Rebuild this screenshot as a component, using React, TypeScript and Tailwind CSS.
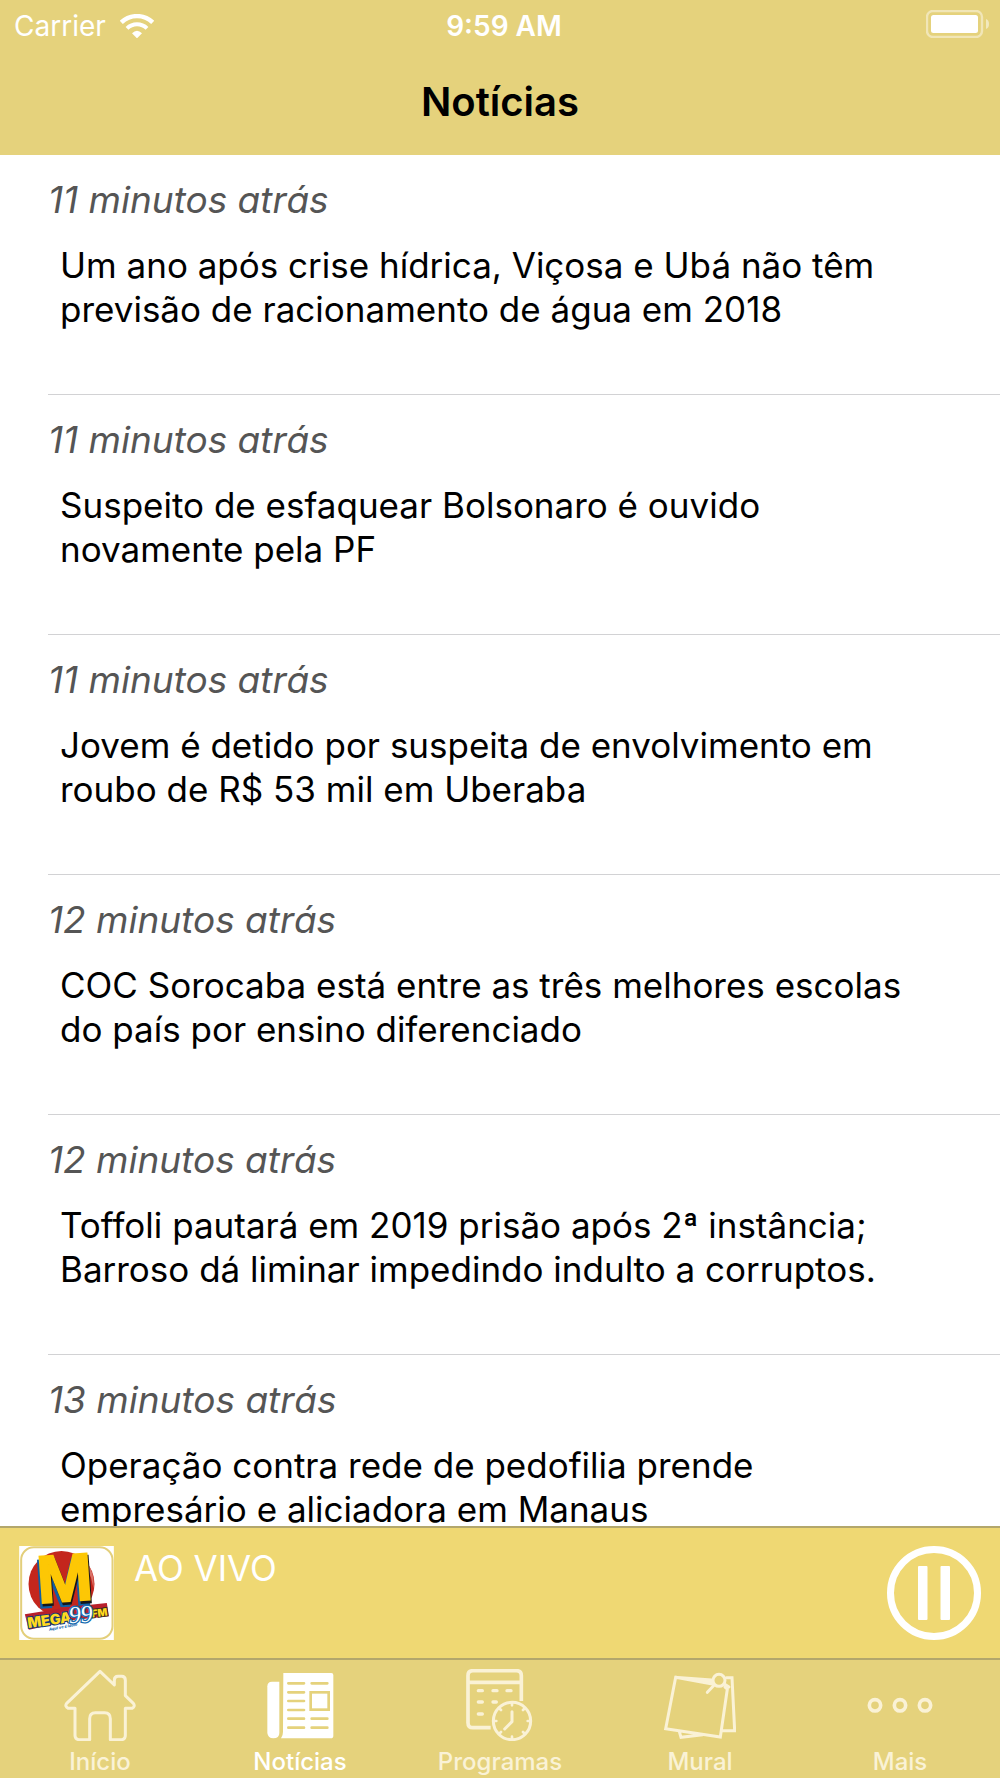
import type { ReactNode } from "react";

const news = [
  { time: "11 minutos atrás", title: "Um ano após crise hídrica, Viçosa e Ubá não têm previsão de racionamento de água em 2018" },
  { time: "11 minutos atrás", title: "Suspeito de esfaquear Bolsonaro é ouvido novamente pela PF" },
  { time: "11 minutos atrás", title: "Jovem é detido por suspeita de envolvimento em roubo de R$ 53 mil em Uberaba" },
  { time: "12 minutos atrás", title: "COC Sorocaba está entre as três melhores escolas do país por ensino diferenciado" },
  { time: "12 minutos atrás", title: "Toffoli pautará em 2019 prisão após 2ª instância; Barroso dá liminar impedindo indulto a corruptos." },
  { time: "13 minutos atrás", title: "Operação contra rede de pedofilia prende empresário e aliciadora em Manaus" },
];

function WifiIcon() {
  return (
    <svg className="h-6 w-[34px]" viewBox="0 0 102 72" aria-hidden="true">
      <g fill="none" stroke="#fff">
        <path d="M4 25 A68 68 0 0 1 98 25" strokeWidth="13" />
        <path d="M21 43 A43 43 0 0 1 81 43" strokeWidth="12" />
      </g>
      <path d="M36 58 Q51 43 66 58 L51 73 Z" fill="#fff" />
    </svg>
  );
}

function BatteryIcon() {
  return (
    <svg className="h-7 w-16" viewBox="0 0 64 28" aria-hidden="true">
      <rect x="1" y="1" width="55" height="26" rx="6" fill="none" stroke="#fff" strokeOpacity=".45" strokeWidth="2.4" />
      <rect x="5" y="5" width="47" height="18" rx="2.5" fill="#fff" />
      <path d="M60 9 Q63 10 63 14 Q63 18 60 19 Z" fill="#fff" fillOpacity=".5" />
    </svg>
  );
}

function StationLogo() {
  return (
    <svg className="h-[94px] w-[95px] shrink-0" viewBox="27 33 284 282" role="img" aria-label="Mega 99 FM">
      <rect x="27" y="33" width="284" height="282" fill="#fff" />
      <rect x="33" y="37" width="274" height="274" rx="38" fill="none" stroke="#e3cf7b" strokeWidth="6" />
      <circle cx="154" cy="147" r="99" fill="#c4261d" />
      <path d="M202 60 Q256 92 250 160 Q240 96 202 60Z" fill="#d97368" />
      <g fontFamily="'Liberation Sans', sans-serif" fontWeight="700" fontSize="200" strokeLinejoin="miter">
        <g transform="rotate(-4 160 140)">
          <text x="77" y="211" fill="#0f5fa5" stroke="#0f5fa5" strokeWidth="10">M</text>
          <text x="83" y="206" fill="#15161a" stroke="#15161a" strokeWidth="8">M</text>
          <text x="81" y="199" fill="#fdc705" stroke="#fdc705" strokeWidth="7">M</text>
        </g>
      </g>
      <path d="M44 238 L178 216 L290 204 L296 244 L196 254 L56 284Z" fill="#b8202b" />
      <g fontFamily="Inter, sans-serif" fontWeight="900" transform="rotate(-8 120 260)">
        <text x="52" y="270" fontSize="43" fill="#ffd91e" stroke="#133b73" strokeWidth="6" paintOrder="stroke">MEGA</text>
        <text x="246" y="265" fontSize="31" fill="#ffd91e" stroke="#3b2c1d" strokeWidth="6" paintOrder="stroke">FM</text>
      </g>
      <text x="176" y="262" fontFamily="'Liberation Serif', serif" fontStyle="italic" fontSize="72" fill="#fff" stroke="#176bb0" strokeWidth="8" paintOrder="stroke" transform="rotate(-4 214 250)">99</text>
      <text x="117" y="287" fontFamily="Inter, sans-serif" fontStyle="italic" fontWeight="800" fontSize="12" fill="#1769ad" transform="rotate(-10 117 287)">Aqui vc é ídolo</text>
    </svg>
  );
}

function PauseIcon() {
  return (
    <svg className="size-[94px]" viewBox="0 0 94 94" aria-hidden="true">
      <circle cx="47" cy="47" r="43.5" fill="none" stroke="#fff" strokeWidth="7" />
      <rect x="31" y="20" width="9.5" height="54" rx="1" fill="#fff" />
      <rect x="53.5" y="20" width="9.5" height="54" rx="1" fill="#fff" />
    </svg>
  );
}

function TabIcon({ children }: { children: ReactNode }) {
  return (
    <svg className="size-[72px]" viewBox="0 0 216 216" fill="none" stroke="#faf2d6" strokeWidth="9" strokeLinejoin="round" strokeLinecap="round" aria-hidden="true">
      {children}
    </svg>
  );
}

const homeIcon = (
  <TabIcon>
    <path d="M108 7 L151 48 V34 Q151 22 162 22 H173 Q184 22 184 34 V80 L208 103 Q215 112 204 118 H184 V199 Q184 212 172 212 H139 V149 Q139 131 122 131 H94 Q77 131 77 149 V212 H46 Q33 212 33 199 V118 H13 Q1 112 8 103 Z" />
  </TabIcon>
);

const newsIcon = (
  <TabIcon>
    <g stroke="none" fill="#fff">
      <path d="M46 38 H24 Q10 38 10 52 V192 Q12 208 28 208 Q46 208 46 192Z" />
      <path d="M58 12 H202 Q208 12 208 18 V200 Q208 208 200 208 H51 Q57 200 57 188Z" />
    </g>
    <g stroke="#e5d27c" strokeWidth="8">
      <path d="M73 43H120M73 70H120M73 96H120M73 123H120M73 149H120M73 176H120M143 43H190M143 149H190M143 176H190" />
      <rect x="140" y="70" width="54" height="52" strokeLinejoin="miter" />
    </g>
  </TabIcon>
);

const programsIcon = (
  <TabIcon>
    <path d="M80 176 H27 Q12 176 12 161 V20 Q12 5 27 5 H157 Q172 5 172 20 V96 M12 40 H172" strokeWidth="11" strokeLinecap="butt" />
    <path d="M43 65H55M87 65H99M129 65H141M43 99H55M87 99H97M43 135H55" strokeWidth="10" />
    <circle cx="144" cy="156" r="56" />
    <path d="M144 128V158L122 180" />
    <path d="M144 102V109M144 203V210M90 156H97M191 156H198M106 118L111 123M182 118L177 123M106 194L111 189M182 194L177 189" strokeWidth="8" />
  </TabIcon>
);

const muralIcon = (
  <TabIcon>
    <path d="M35 25 L145 45 M183 54 L190 60 L169 204 L5 179 L35 25 L143 33 M187 26 H204 L212 185 H174 M46 188 L51 205 L116 197" strokeLinejoin="miter" />
    <path d="M80 31 L144 34 L146 44Z" fill="#faf2d6" strokeWidth="3" />
    <circle cx="165" cy="34" r="18" />
    <path d="M150 49 L130 70 M181 45 L195 54" />
  </TabIcon>
);

const moreIcon = (
  <TabIcon>
    <circle cx="33" cy="109" r="17" strokeWidth="11" />
    <circle cx="108" cy="109" r="17" strokeWidth="11" />
    <circle cx="183" cy="109" r="17" strokeWidth="11" />
  </TabIcon>
);

const tabs = [
  { label: "Início", icon: homeIcon },
  { label: "Notícias", icon: newsIcon, active: true },
  { label: "Programas", icon: programsIcon },
  { label: "Mural", icon: muralIcon },
  { label: "Mais", icon: moreIcon },
];

export default function App() {
  return (
    <div className="flex h-screen flex-col bg-white font-['Inter',sans-serif] text-black">
      <header className="shrink-0 bg-[#e5d27c] pb-[29px]">
        <div className="grid grid-cols-3 items-center px-3.5 pt-1.5 text-[28px] leading-10 text-white">
          <div className="flex items-center gap-3.5">
            <span>Carrier</span>
            <WifiIcon />
          </div>
          <span className="pl-2 text-center font-semibold">9:59 AM</span>
          <div className="-mr-1 -mt-1 flex justify-end">
            <BatteryIcon />
          </div>
        </div>
        <h1 className="mt-8 text-center text-[40px] leading-12 font-semibold">Notícias</h1>
      </header>

      <main className="min-h-0 flex-1 overflow-hidden">
        <ul className="pl-12">
          {news.map((item, i) => (
            <li key={i} className="border-b border-[#d2d2d4] pt-[23px] pr-16 pb-[63px]">
              <a href="#noticia" className="block">
                <time className="block text-[37px] leading-[44px] text-[#555] italic">{item.time}</time>
                <h2 className="mt-[21px] pl-3 text-[35px] leading-[44px]">{item.title}</h2>
              </a>
            </li>
          ))}
        </ul>
      </main>

      <section aria-label="Player" className="flex shrink-0 items-start gap-5 border-t-2 border-[#b3a76c] bg-[#efd873] px-[19px] pt-[18px] pb-[18px]">
        <StationLogo />
        <p className="flex-1 text-[35px] leading-[44px] text-white">AO VIVO</p>
        <button type="button" aria-label="Pausar" className="shrink-0">
          <PauseIcon />
        </button>
      </section>

      <nav aria-label="Principal" className="flex shrink-0 border-t-2 border-[#b3a76c] bg-[#e5d27c] pt-[9px] pb-0.5">
        {tabs.map((tab) => (
          <a
            key={tab.label}
            href="#aba"
            aria-current={tab.active ? "page" : undefined}
            className={
              tab.active
                ? "flex flex-1 basis-0 flex-col items-center gap-[7px] text-[24px] leading-7 font-medium text-white"
                : "flex flex-1 basis-0 flex-col items-center gap-[7px] text-[24px] leading-7 font-medium text-[#faf2d6]"
            }
          >
            {tab.icon}
            <span>{tab.label}</span>
          </a>
        ))}
      </nav>
    </div>
  );
}
